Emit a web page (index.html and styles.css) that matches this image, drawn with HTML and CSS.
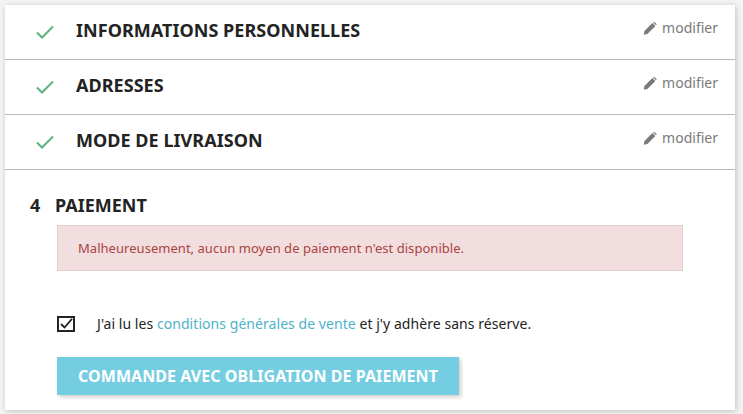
FILE: index.html
```html
<!DOCTYPE html>
<html lang="fr">
<head>
<meta charset="utf-8">
<title>Paiement</title>
<link rel="stylesheet" href="styles.css">
</head>
<body>
<main class="card">
  <section class="step">
    <svg class="check" viewBox="0 0 18 14"><path d="M1 7.5 L6 12.5 L17 1.5"/></svg>
    <h2 class="step-title">INFORMATIONS PERSONNELLES</h2>
    <a class="edit"><svg class="pencil" viewBox="0 0 14 14"><path d="M0.3 13.7 L1 9.8 L9.6 1.2 L12.8 4.4 L4.2 13 Z M10.4 0.5 L11 0 Q11.6 -0.2 12 0.2 L13.8 2 Q14.2 2.4 14 3 L13.5 3.6 Z"/></svg>modifier</a>
  </section>
  <section class="step">
    <svg class="check" viewBox="0 0 18 14"><path d="M1 7.5 L6 12.5 L17 1.5"/></svg>
    <h2 class="step-title">ADRESSES</h2>
    <a class="edit"><svg class="pencil" viewBox="0 0 14 14"><path d="M0.3 13.7 L1 9.8 L9.6 1.2 L12.8 4.4 L4.2 13 Z M10.4 0.5 L11 0 Q11.6 -0.2 12 0.2 L13.8 2 Q14.2 2.4 14 3 L13.5 3.6 Z"/></svg>modifier</a>
  </section>
  <section class="step">
    <svg class="check" viewBox="0 0 18 14"><path d="M1 7.5 L6 12.5 L17 1.5"/></svg>
    <h2 class="step-title">MODE DE LIVRAISON</h2>
    <a class="edit"><svg class="pencil" viewBox="0 0 14 14"><path d="M0.3 13.7 L1 9.8 L9.6 1.2 L12.8 4.4 L4.2 13 Z M10.4 0.5 L11 0 Q11.6 -0.2 12 0.2 L13.8 2 Q14.2 2.4 14 3 L13.5 3.6 Z"/></svg>modifier</a>
  </section>
  <section class="payment">
    <h2 class="pay-title"><span class="pay-num">4</span>PAIEMENT</h2>
    <div class="alert">Malheureusement, aucun moyen de paiement n'est disponible.</div>
    <label class="terms">
      <span class="box"><svg viewBox="0 0 14 12"><path d="M2 6 L5.5 9.5 L13 0.8"/></svg></span>
      <span class="terms-text">J'ai lu les <a class="link">conditions générales de vente</a> et j'y adhère sans réserve.</span>
    </label>
    <button class="cta">COMMANDE AVEC OBLIGATION DE PAIEMENT</button>
  </section>
</main>
</body>
</html>
```

FILE: styles.css
```css
html, body { margin: 0; padding: 0; }
body {
  width: 743px;
  height: 414px;
  overflow: hidden;
  background: #f4f4f4;
  font-family: "Noto Sans", sans-serif;
  color: #232323;
}
.card {
  box-sizing: border-box;
  margin: 5px 8px 0 5px;
  width: 730px;
  height: 405px;
  background: #fff;
  box-shadow: 1px 1px 6px rgba(0, 0, 0, .22);
}
.step {
  box-sizing: border-box;
  height: 55px;
  border-bottom: 1px solid #b8b8b8;
  display: flex;
  align-items: center;
  padding: 0 17px 0 31px;
}
.check {
  width: 18px;
  height: 14px;
  margin-top: 0;
  flex: none;
  fill: none;
  stroke: #5bb27c;
  stroke-width: 2;
}
.step-title {
  margin: -5px 0 0 22px;
  font-size: 18px;
  line-height: 24px;
  font-weight: 700;
  flex: 1;
  letter-spacing: .04px;
}
.edit {
  display: flex;
  align-items: center;
  gap: 5px;
  font-size: 14px;
  line-height: 20px;
  color: #7a7a7a;
  margin-top: -8px;
}
.pencil { width: 14px; height: 13px; fill: #7a7a7a; }
.payment { padding: 24px 52px 0 25px; }
.pay-title {
  margin: 0;
  font-size: 18px;
  line-height: 22px;
  font-weight: 700;
  display: flex;
}
.pay-num { width: 25px; }
.alert {
  box-sizing: border-box;
  margin: 9px 0 0 27px;
  height: 46px;
  width: 626px;
  background: #f2dede;
  border: 1px solid #e6cfcf;
  padding: 0 0 0 20px;
  display: flex;
  align-items: center;
  font-size: 13px;
  letter-spacing: .035px;
  color: #a94442;
}
.terms {
  display: flex;
  align-items: center;
  margin: 43px 0 0 27px;
  font-size: 14px;
  line-height: 20px;
  letter-spacing: .055px;
}
.box {
  box-sizing: border-box;
  width: 18px;
  height: 16px;
  border: 2px solid #232323;
  flex: none;
  display: flex;
}
.box svg { width: 14px; height: 12px; fill: none; stroke: #232323; stroke-width: 1.8; }
.terms-text { margin-left: 22px; }
.link { color: #4db3c6; }
.cta {
  display: block;
  margin: 23px 0 0 27px;
  height: 38px;
  width: 402px;
  border: 0;
  padding: 0;
  background: #74cde1;
  color: #fff;
  font-family: "Noto Sans", sans-serif;
  font-size: 16px;
  font-weight: 700;
  letter-spacing: .06px;
  box-shadow: 2px 2px 4px rgba(0, 0, 0, .2);
}
```
